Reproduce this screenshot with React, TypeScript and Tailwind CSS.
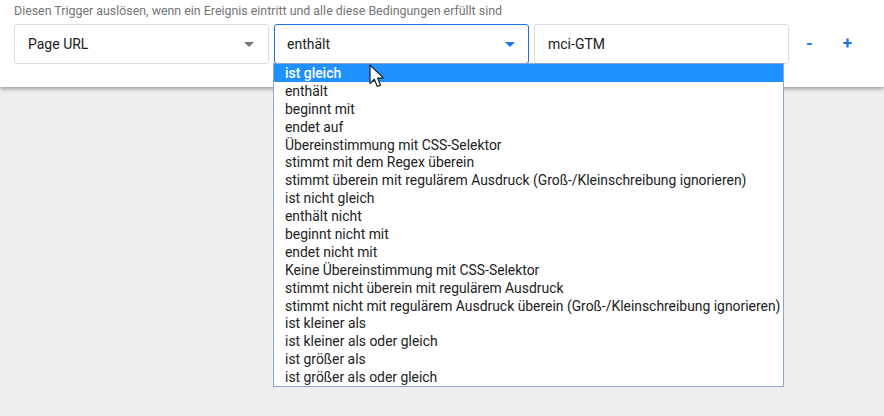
const OPTIONS = [
  'ist gleich',
  'enthält',
  'beginnt mit',
  'endet auf',
  'Übereinstimmung mit CSS-Selektor',
  'stimmt mit dem Regex überein',
  'stimmt überein mit regulärem Ausdruck (Groß-/Kleinschreibung ignorieren)',
  'ist nicht gleich',
  'enthält nicht',
  'beginnt nicht mit',
  'endet nicht mit',
  'Keine Übereinstimmung mit CSS-Selektor',
  'stimmt nicht überein mit regulärem Ausdruck',
  'stimmt nicht mit regulärem Ausdruck überein (Groß-/Kleinschreibung ignorieren)',
  'ist kleiner als',
  'ist kleiner als oder gleich',
  'ist größer als',
  'ist größer als oder gleich',
]

function Caret({ color }: { color: string }) {
  return (
    <svg width="10" height="5" viewBox="0 0 10 5" className="shrink-0">
      <path d="M0 0h10L5 5z" fill={color} />
    </svg>
  )
}

export default function App() {
  return (
    <div className="h-[416px] w-[884px] overflow-hidden bg-[#efeff1] font-['Roboto',sans-serif] text-[#212121]">
      <div className="relative h-[87px] bg-white pl-[14px] pt-[3px] shadow-[0_2px_4px_rgba(0,0,0,0.35)]">
        <p className="text-[12.4px] leading-[16px] text-[#757575]">
          Diesen Trigger auslösen, wenn ein Ereignis eintritt und alle diese Bedingungen erfüllt sind
        </p>
        <div className="mt-[5px] flex items-center gap-[5px]">
          <div className="flex h-[40px] w-[255px] items-center justify-between rounded-[3px] border border-[#dadce0] pl-[13px] pr-[14px] text-[14px]">
            <span>Page URL</span>
            <Caret color="#757575" />
          </div>
          <div className="relative flex h-[40px] w-[255px] items-center justify-between rounded-[3px] border border-[#1a73e8] pl-[12px] pr-[13px] text-[14px]">
            <span>enthält</span>
            <Caret color="#1a73e8" />
          </div>
          <div className="flex h-[40px] w-[255px] items-center rounded-[3px] border border-[#dadce0] pl-[13px] text-[14px]">
            mci-GTM
          </div>
          <div className="ml-[12px] flex items-center gap-[30px] text-[17px] font-bold text-[#1a73e8]">
            <span>-</span>
            <span>+</span>
          </div>
        </div>

        <ul className="absolute left-[273px] top-[63px] z-10 w-[511px] border border-[#8aa6dc] bg-white text-[13.9px] text-[#222]">
          {OPTIONS.map((o, i) => (
            <li
              key={o}
              className={`h-[17.9px] pl-[11px] leading-[18px] ${i === 0 ? 'bg-[#1e90ff] font-medium text-white' : ''}`}
            >
              {o}
            </li>
          ))}
        </ul>

        <svg
          className="absolute left-[369px] top-[64px] z-20"
          width="18"
          height="26"
          viewBox="0 0 18 26"
        >
          <path
            d="M1 1v18.5l4.3-4.2 3 7.2 3.2-1.4-3-7h6z"
            fill="white"
            stroke="#222"
            strokeWidth="1.2"
            strokeLinejoin="round"
          />
        </svg>
      </div>
    </div>
  )
}
